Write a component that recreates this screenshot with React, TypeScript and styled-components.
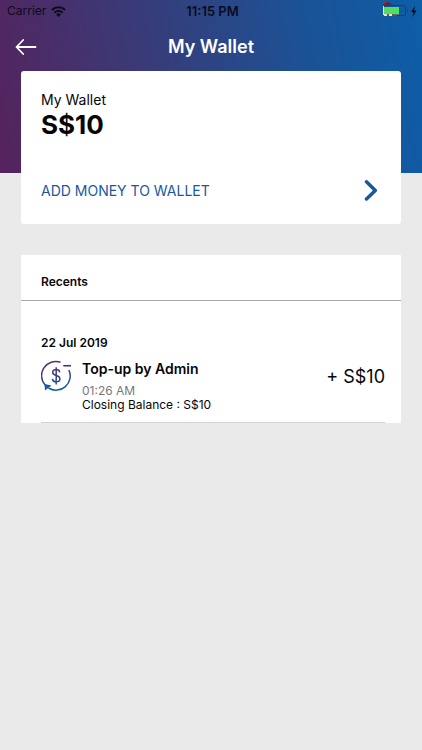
import React from 'react';
import styled, { createGlobalStyle } from 'styled-components';

const GlobalStyle = createGlobalStyle`
  * { box-sizing: border-box; }
  body {
    margin: 0;
    background: #eaeaea;
    font-family: Inter, "Liberation Sans", sans-serif;
    color: #060608;
  }
  h1, h2, h3, p, ul { margin: 0; padding: 0; }
`;

const Page = styled.div`
  min-height: 100vh;
  background: linear-gradient(79deg, #55235d 0%, #46306c 20%, #31417f 46%, #1b5296 73%, #0d5ea8 100%)
    no-repeat top / 100% 173px;
`;

const StatusBar = styled.div`
  display: grid;
  grid-template-columns: 1fr auto 1fr;
  align-items: center;
  height: 22px;
  padding: 0 4px 0 7px;
  font-size: 12px;
  line-height: 16px;
  color: #0c0a1c;
`;

const StatusGroup = styled.div<{ $end?: boolean }>`
  display: flex;
  align-items: center;
  justify-content: ${(p) => (p.$end ? 'flex-end' : 'flex-start')};
  gap: 5px;
`;

const Clock = styled.time`
  font-size: 13px;
  font-weight: 600;
`;

const NavBar = styled.header`
  display: grid;
  grid-template-columns: 40px 1fr 40px;
  align-items: center;
  height: 49px;
  padding: 0 6px;
`;

const BackButton = styled.button`
  display: grid;
  place-items: center;
  height: 40px;
  padding: 0;
  border: 0;
  background: none;
  color: #fff;
  cursor: pointer;
`;

const Title = styled.h1`
  font-size: 18px;
  line-height: 24px;
  font-weight: 600;
  text-align: center;
  color: #fff;
`;

const Content = styled.main`
  display: flex;
  flex-direction: column;
  gap: 31px;
  padding: 0 21px;
`;

const BalanceCard = styled.section`
  padding: 20px 20px 18px;
  border-radius: 3px;
  background: #fff;
`;

const BalanceLabel = styled.h2`
  font-size: 14px;
  line-height: 18px;
  font-weight: 400;
`;

const BalanceAmount = styled.p`
  font-size: 26px;
  line-height: 32px;
  font-weight: 700;
`;

const AddMoneyButton = styled.button`
  display: flex;
  align-items: center;
  justify-content: space-between;
  width: 100%;
  height: 32px;
  margin-top: 33px;
  padding: 0 3px 0 0;
  border: 0;
  background: none;
  font: inherit;
  font-size: 14px;
  color: #17599f;
  cursor: pointer;
`;

const RecentsCard = styled.section`
  background: #fff;
`;

const RecentsHeading = styled.h2`
  padding: 18px 20px 9px;
  border-bottom: 1px solid #a9a9a9;
  font-size: 12px;
  line-height: 18px;
  font-weight: 600;
`;

const DayGroup = styled.div`
  padding: 33px 16px 0 20px;
`;

const DayHeading = styled.h3`
  font-size: 12px;
  line-height: 18px;
  font-weight: 600;
`;

const TransactionList = styled.ul`
  list-style: none;
`;

const TransactionRow = styled.li`
  display: grid;
  grid-template-columns: 31px 1fr auto;
  column-gap: 10px;
  padding: 7px 0 10px;
  border-bottom: 1px solid #d2d2d2;
`;

const TransactionText = styled.div`
  font-size: 12px;
  line-height: 14px;
`;

const TransactionTitle = styled.p`
  padding-bottom: 5px;
  font-size: 14px;
  line-height: 20px;
  font-weight: 600;
`;

const TransactionTime = styled.p`
  color: #77777b;
`;

const TransactionAmount = styled.p`
  padding-top: 6px;
  font-size: 18px;
  line-height: 24px;
`;

const WifiIcon = () => (
  <svg width="15" height="11" viewBox="0 0 15 11" fill="none" stroke="currentColor" strokeWidth="2" aria-hidden="true">
    <path d="M.9 4a9.5 9.5 0 0 1 13.2 0" />
    <path d="M3.4 6.7a5.9 5.9 0 0 1 8.2 0" />
    <path d="M5.1 8.5a3.4 3.4 0 0 1 4.8 0L7.5 11z" fill="currentColor" stroke="none" />
  </svg>
);

const BatteryIcon = () => (
  <svg width="35" height="20" viewBox="0 0 35 20" aria-hidden="true">
    <defs>
      <linearGradient id="shade" x1="0" x2="1" y1="0" y2="0.3">
        <stop offset="0" stopColor="#c02a28" />
        <stop offset="0.4" stopColor="#4a2440" />
        <stop offset="1" stopColor="#155699" stopOpacity="0" />
      </linearGradient>
    </defs>
    <path d="M0 1h4l12 4.500H0z" fill="url(#shade)" />
    <rect x="0.5" y="4.500" width="22" height="10" rx="2" fill="none" stroke="#17406f" />
    <path d="M24 7.500q1.500 2 0 4z" fill="#17406f" />
    <rect x="1" y="6" width="15" height="7.500" fill="#52dc68" />
    <path d="M0 5h1v9H0zM1 13h3v2H1zM6 13h3v2H6z" fill="#e9e4c4" />
    <path d="M4 13.500h2V15H4zM9 13.500h5V15H9z" fill="#9a3433" />
    <path d="M32 5 28 11h2.500l-1 5 4-6.500h-2.500z" fill="#080a18" />
  </svg>
);

const BackIcon = () => (
  <svg width="22" height="18" viewBox="0 0 22 18" fill="none" stroke="currentColor" strokeWidth="1.800" strokeLinecap="round" strokeLinejoin="round" aria-hidden="true">
    <path d="M20.500 9H1.500M8.200 2 1.500 9l6.700 7" />
  </svg>
);

const ChevronIcon = () => (
  <svg width="14" height="22" viewBox="0 0 14 22" fill="none" stroke="currentColor" strokeWidth="3.500" strokeLinecap="round" strokeLinejoin="round" aria-hidden="true">
    <path d="M2.500 2.800 11.300 11.500l-8.800 8.500" />
  </svg>
);

const TopUpIcon = () => (
  <svg width="31" height="32" viewBox="0 0 31 32" fill="none" strokeWidth="1.500" aria-hidden="true">
    <defs>
      <linearGradient id="ring" gradientUnits="userSpaceOnUse" x1="10" y1="2" x2="15" y2="31">
        <stop offset="0" stopColor="#5a2b66" />
        <stop offset="0.55" stopColor="#36427f" />
        <stop offset="1" stopColor="#0f5fa8" />
      </linearGradient>
    </defs>
    <g stroke="url(#ring)">
      <path d="M4.300 26.300A14.200 14.200 0 0 1 19.500 3.300" />
      <path d="M27.900 11A14.200 14.200 0 0 1 7.500 29" />
      <path d="M22.300 6.750H30" strokeWidth="1.600" />
      <path d="M18.700 13.300c-.2-1.700-1.500-2.700-3.500-2.700-2.100 0-3.500 1.100-3.500 2.900 0 4 7.200 2.100 7.200 6.200 0 1.900-1.500 3.100-3.700 3.100s-3.600-1.100-3.800-3M15.200 8.200v17.200" />
    </g>
    <path d="M3.500 25 10.500 26.500 4 31.500z" fill="#135b9f" />
  </svg>
);

const transactions = [
  { title: 'Top-up by Admin', time: '01:26 AM', closing: 'S$10', amount: '+ S$10' },
];

export default function App() {
  return (
    <>
      <GlobalStyle />
      <Page>
        <StatusBar>
          <StatusGroup>
            <span>Carrier</span>
            <WifiIcon />
          </StatusGroup>
          <Clock>11:15 PM</Clock>
          <StatusGroup $end>
            <BatteryIcon />
          </StatusGroup>
        </StatusBar>
        <NavBar>
          <BackButton type="button" aria-label="Back">
            <BackIcon />
          </BackButton>
          <Title>My Wallet</Title>
        </NavBar>
        <Content>
          <BalanceCard>
            <BalanceLabel>My Wallet</BalanceLabel>
            <BalanceAmount>S$10</BalanceAmount>
            <AddMoneyButton type="button">
              ADD MONEY TO WALLET
              <ChevronIcon />
            </AddMoneyButton>
          </BalanceCard>
          <RecentsCard>
            <RecentsHeading>Recents</RecentsHeading>
            <DayGroup>
              <DayHeading>22 Jul 2019</DayHeading>
              <TransactionList>
                {transactions.map((t) => (
                  <TransactionRow key={t.time}>
                    <TopUpIcon />
                    <TransactionText>
                      <TransactionTitle>{t.title}</TransactionTitle>
                      <TransactionTime>{t.time}</TransactionTime>
                      <p>Closing Balance : {t.closing}</p>
                    </TransactionText>
                    <TransactionAmount>{t.amount}</TransactionAmount>
                  </TransactionRow>
                ))}
              </TransactionList>
            </DayGroup>
          </RecentsCard>
        </Content>
      </Page>
    </>
  );
}
